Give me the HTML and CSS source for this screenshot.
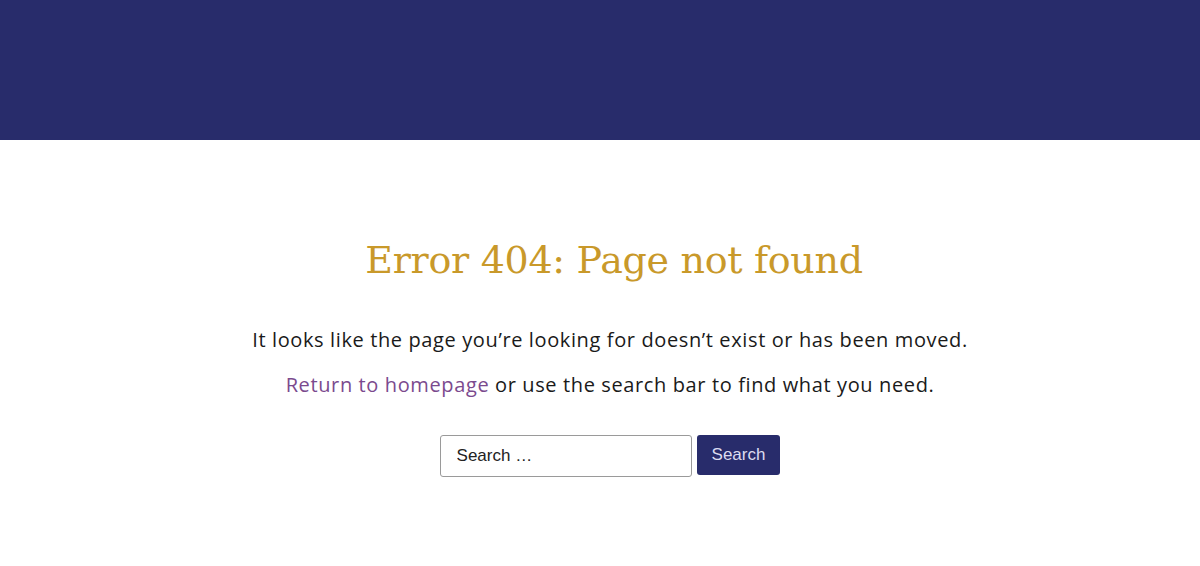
FILE: index.html
```html
<!DOCTYPE html>
<html lang="en">
<head>
    <meta charset="UTF-8">
    <title>Page not found</title>
    <link rel="stylesheet" href="styles.css">
</head>
<body>
<header class="site-header"></header>
<main class="error-page">
    <h1 class="error-title">Error 404: Page not found</h1>
    <p class="error-text">It looks like the page you’re looking for doesn’t exist or has been moved.</p>
    <p class="error-text"><a href="#" class="home-link">Return to homepage</a> or use the search bar to find what you need.</p>
    <form class="search-form" onsubmit="return false;">
        <input type="search" class="search-field" placeholder="Search …">
        <button type="submit" class="search-submit">Search</button>
    </form>
</main>
</body>
</html>
```

FILE: styles.css
```css
body {
    margin: 0;
    background: #fff;
    font-family: "Open Sans", "DejaVu Sans", sans-serif;
    color: #1a1a1a;
}

.site-header {
    height: 140px;
    background-color: #282c6b;
}

.error-page {
    display: flex;
    flex-direction: column;
    align-items: center;
    padding: 95px 0 0 20px;
    text-align: center;
}

.error-title {
    margin: 0 0 41px 8px;
    font-family: "DejaVu Serif", "Liberation Serif", serif;
    font-weight: normal;
    font-size: 38px;
    line-height: 50px;
    color: #c9992a;
    letter-spacing: -0.3px;
}

.error-text {
    margin: 0 0 17px;
    font-size: 20px;
    line-height: 28px;
    letter-spacing: 0.62px;
}

.home-link {
    color: #7b4a8e;
    text-decoration: none;
}

.search-form {
    display: flex;
    align-items: flex-start;
    gap: 5px;
    margin-top: 19px;
}

.search-field {
    width: 252px;
    height: 42px;
    box-sizing: border-box;
    padding: 0 16px;
    border: 1px solid #9a9a9a;
    border-radius: 3px;
    font-family: "Liberation Sans", Arial, sans-serif;
    font-size: 17px;
    color: #222;
    background: #fff;
}

.search-field::placeholder {
    color: #222;
}

.search-submit {
    height: 40px;
    padding: 0 15px;
    border: none;
    border-radius: 3px;
    background-color: #282c6b;
    color: #dcdcf0;
    font-family: "Liberation Sans", Arial, sans-serif;
    font-size: 17px;
    cursor: pointer;
}
```
